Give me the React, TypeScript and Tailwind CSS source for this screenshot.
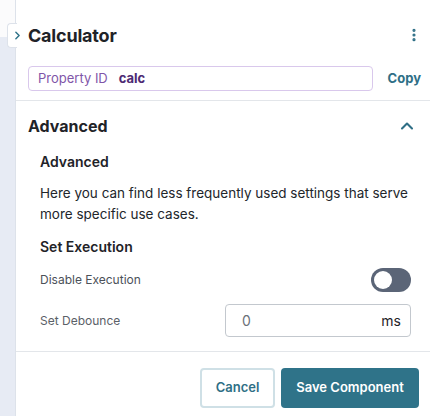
import { ChevronRight, ChevronUp, EllipsisVertical } from "lucide-react";

const font = { fontFamily: "Inter, 'Noto Sans', sans-serif" };

const Toggle = () => (
  <div className="w-[40px] h-[24px] rounded-full bg-[#5b6577] flex items-center px-[3px]">
    <div className="w-[18px] h-[18px] rounded-full bg-white" />
  </div>
);

export default function App() {
  return (
    <div className="relative w-[430px] h-[416px] flex bg-white overflow-hidden text-[#1f2328]" style={font}>
      <div className="w-[16px] shrink-0 flex flex-col border-r border-[#dde2ea]">
        <div className="h-[37px] bg-[#fbfbfc]" />
        <div className="flex-1 bg-[#e7ebf4]" />
      </div>
      <div className="absolute z-10 left-[7px] top-[23px] w-[10px] h-[25px] bg-white border-l border-t border-b border-[#dde2ea] rounded-l-[4px]">
        <ChevronRight className="absolute left-[3px] top-[5px] w-[13px] h-[13px] text-[#2f7389]" strokeWidth={2.75} />
      </div>

      <div className="flex-1 min-w-0 flex flex-col">
        <div className="h-[101px] pl-[12px] pr-[9px] border-b border-[#e3e6ea] flex flex-col">
          <div className="h-[66px] flex items-center justify-between pt-[4px]">
            <h1 className="text-[18px] font-bold tracking-[-0.2px]">Calculator</h1>
            <EllipsisVertical className="w-[16px] h-[16px] text-[#2f6f86] mr-[-1px]" strokeWidth={2.75} />
          </div>
          <div className="flex items-center">
            <div className="flex-1 h-[25px] border border-[#d9c8ec] rounded-[4px] flex items-center px-[9px] text-[13px]">
              <span className="text-[#7f56a8]">Property ID</span>
              <span className="ml-[11px] font-bold text-[#4c2a73]">calc</span>
            </div>
            <span className="ml-[15px] text-[13px] font-bold text-[#2f6f86]">Copy</span>
          </div>
        </div>

        <div className="h-[251px] border-b border-[#e3e6ea] flex flex-col">
          <div className="h-[50px] pl-[12px] pr-[13px] flex items-center justify-between">
            <h2 className="text-[16px] font-bold">Advanced</h2>
            <ChevronUp className="w-[20px] h-[20px] text-[#2f6f86]" strokeWidth={2.5} />
          </div>
          <div className="pl-[24px] pr-[19px] flex flex-col">
            <h3 className="h-[20px] flex items-center text-[14px] font-semibold">Advanced</h3>
            <p className="mt-[12px] text-[13.5px] leading-[21px] text-[#22262b]">
              Here you can find less frequently used settings that serve more specific use cases.
            </p>
            <h3 className="h-[20px] mt-[11px] flex items-center text-[14px] font-semibold">Set Execution</h3>
            <div className="mt-[12px] h-[24px] flex items-center justify-between">
              <span className="text-[12px] text-[#4b5159]">Disable Execution</span>
              <Toggle />
            </div>
            <div className="mt-[12px] h-[33px] flex items-center justify-between">
              <span className="text-[12px] text-[#5b6168]">Set Debounce</span>
              <div className="w-[186px] h-[33px] border border-[#c3c8ce] rounded-[4px] flex items-center justify-between pl-[16px] pr-[9px] text-[14px]">
                <span className="text-[#6b7178]">0</span>
                <span className="text-[#1f2328]">ms</span>
              </div>
            </div>
          </div>
        </div>

        <div className="flex-1 flex justify-end items-start pt-[16px] pr-[11px] gap-[6px]">
          <button className="w-[75px] h-[40px] rounded-[4px] border-2 border-[#cfe0e6] text-[13px] font-semibold text-[#2f6f86]">
            Cancel
          </button>
          <button className="w-[138px] h-[40px] rounded-[4px] bg-[#2f7389] text-[13px] font-semibold text-white">
            Save Component
          </button>
        </div>
      </div>
    </div>
  );
}
